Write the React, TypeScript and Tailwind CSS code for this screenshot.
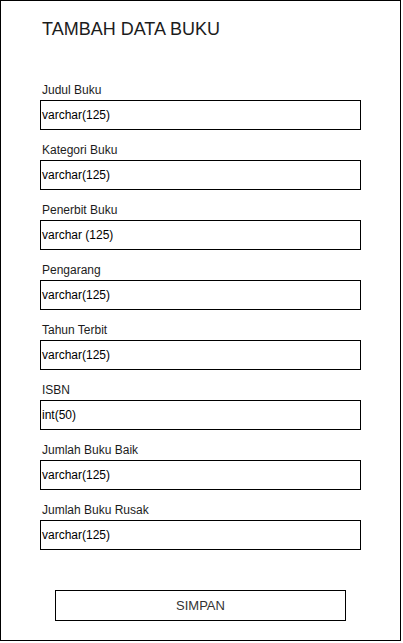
import React from 'react';

const FIELDS = [
    { label: "Judul Buku", type: "varchar(125)" },
    { label: "Kategori Buku", type: "varchar(125)" },
    { label: "Penerbit Buku", type: "varchar (125)" },
    { label: "Pengarang", type: "varchar(125)" },
    { label: "Tahun Terbit", type: "varchar(125)" },
    { label: "ISBN", type: "int(50)" },
    { label: "Jumlah Buku Baik", type: "varchar(125)" },
    { label: "Jumlah Buku Rusak", type: "varchar(125)" },
];

const App: React.FC = () => {
    return (
        <div className="bg-white w-[403px] h-[643px] font-['Liberation_Sans',Arial,sans-serif] text-[#1c1c1c]">
            <div className="w-[401px] h-[641px] border border-black flex flex-col">
                {/* Title */}
                <h1 className="mt-[18px] pl-[41px] text-[18px] leading-[20px]">TAMBAH DATA BUKU</h1>

                {/* Form fields */}
                <div className="mt-[41px] pl-[39px] flex flex-col gap-[10px]">
                    {FIELDS.map((f) => (
                        <div key={f.label} className="flex flex-col">
                            <label className="h-[20px] pl-[2px] text-[12px] leading-[20px]">{f.label}</label>
                            <div className="w-[321px] h-[30px] border border-black flex items-center pl-[1px] text-[12px] text-black">
                                {f.type}
                            </div>
                        </div>
                    ))}
                </div>

                {/* Save button */}
                <button className="mt-[40px] ml-[54px] w-[291px] h-[31px] border border-black text-[13px] text-[#333] flex items-center justify-center">
                    SIMPAN
                </button>
            </div>
        </div>
    );
};

export default App;
